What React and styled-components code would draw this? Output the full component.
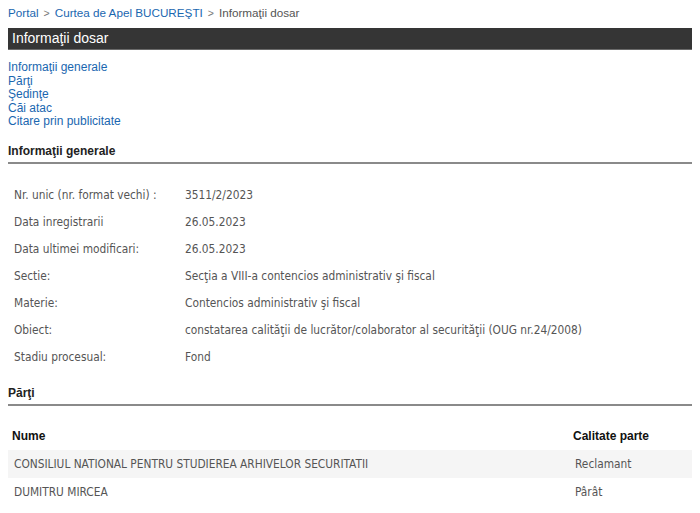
import React from "react";
import styled, { createGlobalStyle } from "styled-components";

const GlobalStyle = createGlobalStyle`
  body {
    margin: 0;
    background: #fff;
    font-family: "Liberation Sans", Arial, sans-serif;
  }
`;

const Page = styled.div`
  padding: 6px 8px 0 8px;
  width: 684px;
`;

const Breadcrumb = styled.div`
  font-size: 11.7px;
  line-height: 14px;
  color: #555;
  display: flex;
  gap: 5px;
`;

const Crumb = styled.a`
  color: #1a67b0;
  text-decoration: none;
`;

const Sep = styled.span`
  color: #777;
  font-size: 10.5px;
`;

const TitleBar = styled.div`
  margin-top: 8px;
  height: 21px;
  background: #353535;
  border-bottom: 1px solid #6a6a6a;
  color: #fff;
  font-size: 14px;
  line-height: 21px;
  padding-left: 4px;
`;

const Nav = styled.nav`
  margin-top: 11px;
  display: flex;
  flex-direction: column;
`;

const NavLink = styled.a`
  color: #1a67b0;
  font-size: 12px;
  line-height: 13.5px;
  text-decoration: none;
`;

const SectionTitle = styled.h2`
  margin: ${(p) => p.$top}px 0 0 0;
  font-size: 12px;
  font-weight: bold;
  color: #222;
  line-height: 16px;
  padding-bottom: 3px;
  border-bottom: 2px solid #8a8a8a;
`;

const InfoList = styled.div`
  margin-top: 18px;
  display: flex;
  flex-direction: column;
`;

const InfoRow = styled.div`
  display: flex;
  height: 27px;
  align-items: center;
  font-family: "DejaVu Sans Condensed", "DejaVu Sans", sans-serif;
  font-size: 11.8px;
  color: #555;
`;

const Label = styled.div`
  width: 171px;
  padding-left: 6px;
  flex-shrink: 0;
`;

const Value = styled.div``;

const Table = styled.table`
  margin-top: 16px;
  width: 100%;
  border-collapse: collapse;
`;

const Th = styled.th`
  text-align: left;
  font-size: 12px;
  font-weight: bold;
  color: #111;
  height: 28px;
  padding: 0 4px;
  width: ${(p) => p.$width || "auto"};
`;

const Tr = styled.tr`
  background: ${(p) => (p.$striped ? "#f5f5f5" : "transparent")};
`;

const Td = styled.td`
  font-family: "DejaVu Sans Condensed", "DejaVu Sans", sans-serif;
  font-size: 11.8px;
  color: #555;
  height: 28px;
  padding: 0 6px;
`;

const info = [
  ["Nr. unic (nr. format vechi) :", "3511/2/2023"],
  ["Data inregistrarii", "26.05.2023"],
  ["Data ultimei modificari:", "26.05.2023"],
  ["Sectie:", "Secţia a VIII-a contencios administrativ şi fiscal"],
  ["Materie:", "Contencios administrativ şi fiscal"],
  ["Obiect:", "constatarea calităţii de lucrător/colaborator al securităţii (OUG nr.24/2008)"],
  ["Stadiu procesual:", "Fond"],
];

const parti = [
  ["CONSILIUL NATIONAL PENTRU STUDIEREA ARHIVELOR SECURITATII", "Reclamant"],
  ["DUMITRU MIRCEA", "Pârât"],
];

function App() {
  return (
    <Page>
      <GlobalStyle />
      <Breadcrumb>
        <Crumb href="#">Portal</Crumb>
        <Sep>&gt;</Sep>
        <Crumb href="#">Curtea de Apel BUCUREŞTI</Crumb>
        <Sep>&gt;</Sep>
        <span>Informaţii dosar</span>
      </Breadcrumb>
      <TitleBar>Informaţii dosar</TitleBar>
      <Nav>
        <NavLink href="#">Informaţii generale</NavLink>
        <NavLink href="#">Părţi</NavLink>
        <NavLink href="#">Şedinţe</NavLink>
        <NavLink href="#">Căi atac</NavLink>
        <NavLink href="#">Citare prin publicitate</NavLink>
      </Nav>
      <SectionTitle $top={14}>Informaţii generale</SectionTitle>
      <InfoList>
        {info.map(([label, value]) => (
          <InfoRow key={label}>
            <Label>{label}</Label>
            <Value>{value}</Value>
          </InfoRow>
        ))}
      </InfoList>
      <SectionTitle $top={14}>Părţi</SectionTitle>
      <Table>
        <thead>
          <tr>
            <Th>Nume</Th>
            <Th $width="115px">Calitate parte</Th>
          </tr>
        </thead>
        <tbody>
          {parti.map(([nume, calitate], i) => (
            <Tr key={nume} $striped={i % 2 === 0}>
              <Td>{nume}</Td>
              <Td>{calitate}</Td>
            </Tr>
          ))}
        </tbody>
      </Table>
    </Page>
  );
}

export default App;
